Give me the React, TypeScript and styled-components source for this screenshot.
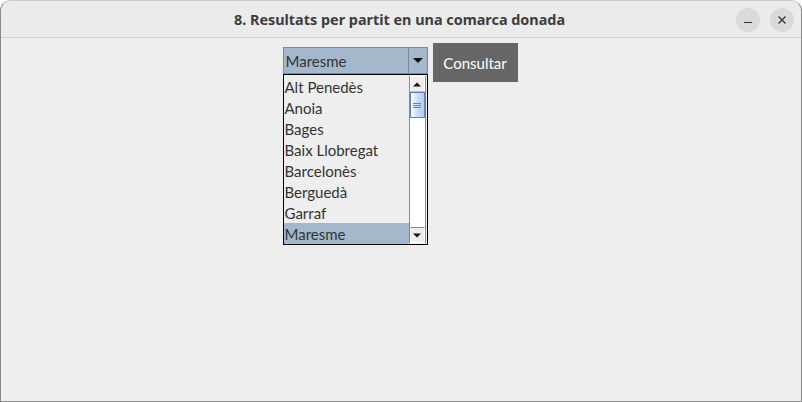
import styled, { createGlobalStyle } from 'styled-components';

const GlobalStyle = createGlobalStyle`
  html, body {
    margin: 0;
    padding: 0;
    background: #ffffff;
  }
  * {
    box-sizing: border-box;
  }
`;

const Frame = styled.div`
  position: relative;
  width: 802px;
  height: 402px;
  background: #eeeeee;
  border: 1px solid #8a8a8a;
  border-top-color: #c8c8c8;
  border-radius: 11px 11px 0 0;
  overflow: hidden;
  display: flex;
  flex-direction: column;
`;

const TitleBar = styled.div`
  height: 37px;
  flex: 0 0 37px;
  background: #ebebeb;
  border-bottom: 1px solid #d2d2d2;
  display: flex;
  align-items: center;
  justify-content: center;
  position: relative;
`;

const Title = styled.div`
  font-family: 'Noto Sans', 'DejaVu Sans', sans-serif;
  font-weight: 700;
  font-size: 14.4px;
  color: #3d3d3d;
  margin-left: -3px;
`;

const WindowButtons = styled.div`
  position: absolute;
  right: 7px;
  top: 7px;
  display: flex;
  gap: 10px;
`;

const WinButton = styled.div`
  width: 24px;
  height: 24px;
  border-radius: 50%;
  background: #dadada;
  display: flex;
  align-items: center;
  justify-content: center;
`;

const Content = styled.div`
  flex: 1;
  display: flex;
  justify-content: center;
  align-items: flex-start;
  gap: 5px;
  padding: 5px 2px 0 0;
`;

const ComboWrap = styled.div`
  position: relative;
  margin-top: 4px;
`;

const Combo = styled.div`
  width: 145px;
  height: 27px;
  background: #a3b8cc;
  border: 1px solid #7a8a99;
  display: flex;
  align-items: stretch;
`;

const ComboText = styled.div`
  flex: 1;
  font-family: Lato, 'Open Sans', sans-serif;
  font-size: 15px;
  color: #333333;
  padding-left: 2px;
  display: flex;
  align-items: center;
`;

const ArrowButton = styled.div`
  width: 19px;
  border-left: 1px solid #7a8a99;
  display: flex;
  align-items: center;
  justify-content: center;
`;

const Popup = styled.div`
  position: absolute;
  left: 0;
  top: 27px;
  width: 145px;
  height: 171px;
  border: 1px solid #000000;
  background: #eeeeee;
  display: flex;
  padding: 1px 0 0 0;
`;

const List = styled.div`
  flex: 1;
  display: flex;
  flex-direction: column;
`;

const Item = styled.div<{ $selected?: boolean }>`
  height: 21px;
  font-family: Lato, 'Open Sans', sans-serif;
  font-size: 15px;
  color: #333333;
  padding-left: 1px;
  display: flex;
  align-items: center;
  background: ${(p) => (p.$selected ? '#a3b8cc' : 'transparent')};
`;

const ScrollBar = styled.div`
  width: 17px;
  margin: 0 1px 1px 0;
  border-left: 1px solid #7a8a99;
  border-right: 1px solid #7a8a99;
  background: #ffffff;
  display: flex;
  flex-direction: column;
`;

const ScrollButton = styled.div`
  height: 16px;
  background: #eeeeee;
  border: 1px solid #ffffff;
  border-bottom-color: #b8b8b8;
  display: flex;
  align-items: center;
  justify-content: center;
`;

const ScrollButtonBottom = styled(ScrollButton)`
  margin-top: auto;
  border-top: 1px solid #7a8a99;
  border-bottom-color: #ffffff;
`;

const Thumb = styled.div`
  height: 26px;
  background: linear-gradient(to right, #ffffff, #c8daf0 55%, #b8cfe8);
  border: 1px solid #6382bf;
  display: flex;
  flex-direction: column;
  align-items: center;
  justify-content: center;
  gap: 1px;
`;

const Grip = styled.div`
  width: 8px;
  height: 1px;
  background: #6382bf;
`;

const Button = styled.div`
  width: 85px;
  height: 39px;
  background: #666666;
  color: #ffffff;
  font-family: Lato, 'Open Sans', sans-serif;
  font-size: 15px;
  display: flex;
  align-items: center;
  justify-content: center;
`;

const DownArrow = () => (
  <svg width="10" height="6" viewBox="0 0 10 6">
    <path d="M0 0 H10 L5 5 Z" fill="#111" />
  </svg>
);

const SmallArrow = ({ up }: { up?: boolean }) => (
  <svg width="8" height="5" viewBox="0 0 8 5">
    <path d={up ? 'M0 4.5 H8 L4 0.5 Z' : 'M0 0.5 H8 L4 4.5 Z'} fill="#111" />
  </svg>
);

const comarques = [
  'Alt Penedès',
  'Anoia',
  'Bages',
  'Baix Llobregat',
  'Barcelonès',
  'Berguedà',
  'Garraf',
  'Maresme',
];

export default function App() {
  return (
    <>
      <GlobalStyle />
      <Frame>
        <TitleBar>
          <Title>8. Resultats per partit en una comarca donada</Title>
          <WindowButtons>
            <WinButton>
              <svg width="10" height="10" viewBox="0 0 10 10">
                <path d="M1 7.5 H9" stroke="#333" strokeWidth="1.2" />
              </svg>
            </WinButton>
            <WinButton>
              <svg width="10" height="10" viewBox="0 0 10 10">
                <path d="M1.5 1.5 L8.5 8.5 M8.5 1.5 L1.5 8.5" stroke="#333" strokeWidth="1.3" />
              </svg>
            </WinButton>
          </WindowButtons>
        </TitleBar>
        <Content>
          <ComboWrap>
            <Combo>
              <ComboText>Maresme</ComboText>
              <ArrowButton>
                <DownArrow />
              </ArrowButton>
            </Combo>
            <Popup>
              <List>
                {comarques.map((c) => (
                  <Item key={c} $selected={c === 'Maresme'}>
                    {c}
                  </Item>
                ))}
              </List>
              <ScrollBar>
                <ScrollButton>
                  <SmallArrow up />
                </ScrollButton>
                <Thumb>
                  <Grip />
                  <Grip />
                  <Grip />
                </Thumb>
                <ScrollButtonBottom>
                  <SmallArrow />
                </ScrollButtonBottom>
              </ScrollBar>
            </Popup>
          </ComboWrap>
          <Button>Consultar</Button>
        </Content>
      </Frame>
    </>
  );
}
